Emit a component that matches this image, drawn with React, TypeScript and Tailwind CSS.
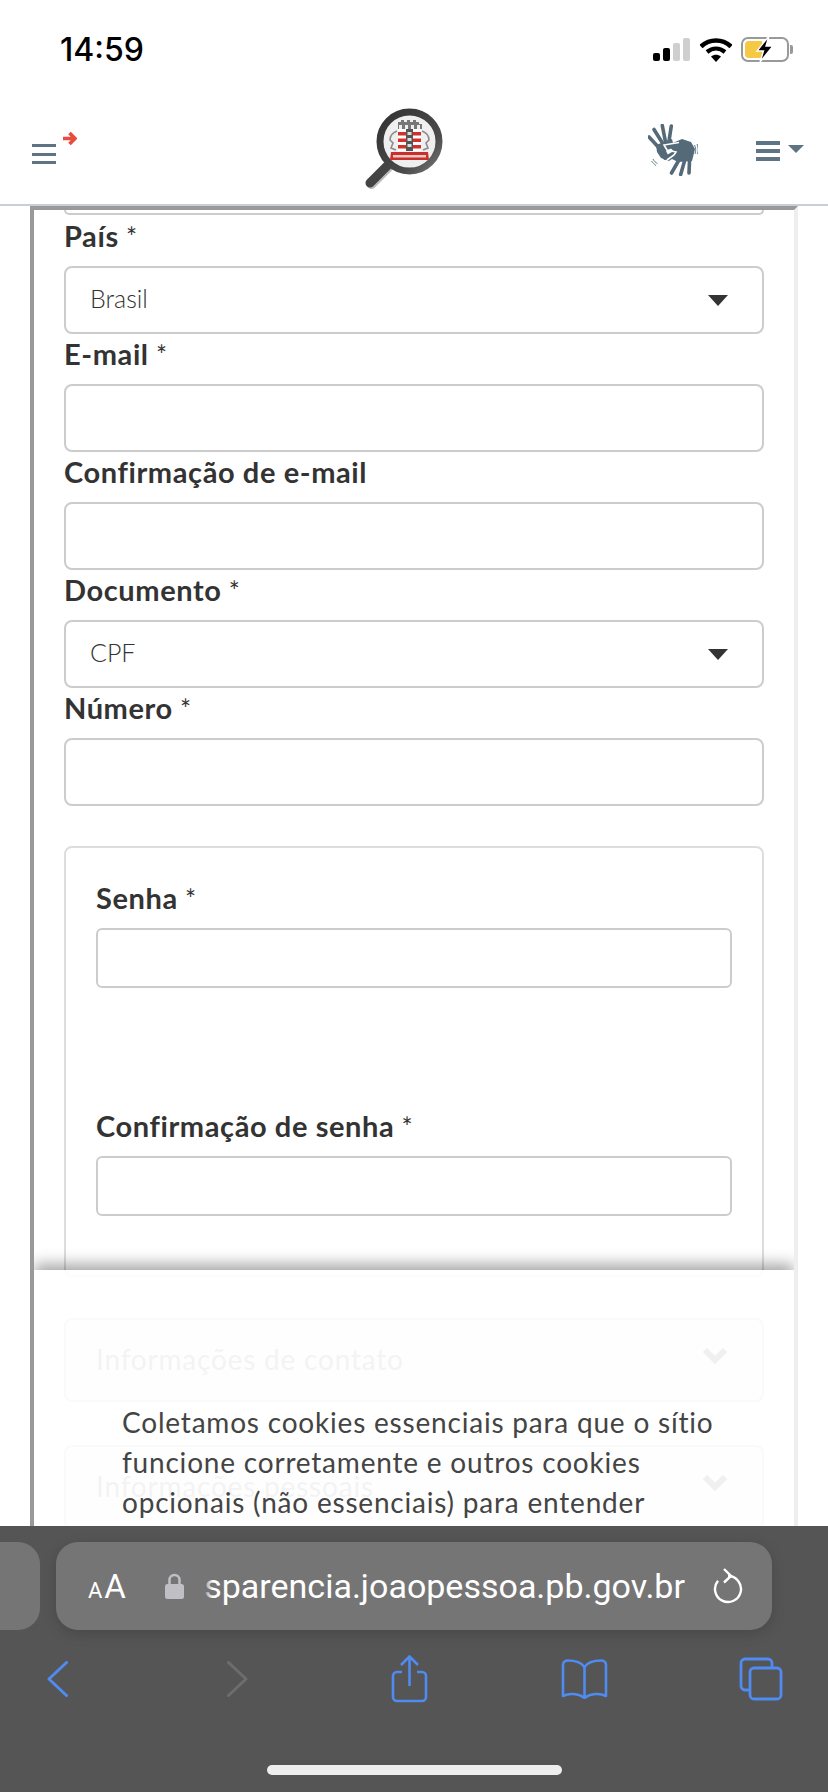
import React from 'react';

const font = { fontFamily: 'Lato, "Noto Sans", sans-serif' };

function Hamburger({ className, barClass }: { className: string; barClass: string }) {
  return (
    <div className={`flex flex-col justify-between ${className}`}>
      <span className={`block bg-[#5f7482] ${barClass}`} />
      <span className={`block bg-[#5f7482] ${barClass}`} />
      <span className={`block bg-[#5f7482] ${barClass}`} />
    </div>
  );
}

function Logo() {
  return (
    <svg width="82" height="82" viewBox="0 0 82 82" className="block">
      <defs>
        <linearGradient id="ring" x1="0" y1="0" x2="1" y2="1">
          <stop offset="0" stopColor="#333" />
          <stop offset="0.7" stopColor="#4a4a4a" />
          <stop offset="1" stopColor="#777" />
        </linearGradient>
      </defs>
      <line x1="24" y1="58" x2="7" y2="75" stroke="#bbb" strokeWidth="9" strokeLinecap="round" transform="translate(1.5 1.5)" />
      <line x1="24" y1="58" x2="7" y2="75" stroke="#444" strokeWidth="9" strokeLinecap="round" />
      <circle cx="46.5" cy="33.500" r="29.500" fill="#efefef" stroke="url(#ring)" strokeWidth="7" />
      {/* crest */}
      <path d="M35 14h3v-2h3v2h3v-2h3v2h3v-2h3v2h3v2h3v5H35z" fill="#777" />
      <path d="M36 17h3v4h-3zM42 17h3v4h-3zM48 17h3v4h-3zM54 17h3v4h-3z" fill="#eee" />
      <rect x="35" y="21" width="23" height="22" fill="#fff" />
      <path d="M35 24h8v3.500h-8zM35 30.500h8V34h-8zM35 37h8v3.500h-8zM50 24h8v3.500h-8zM50 30.500h8V34h-8zM50 37h8v3.500h-8z" fill="#d2302c" />
      <rect x="43" y="21" width="7" height="22" fill="#555" />
      <path d="M44.500 24h4v3h-4zM44.500 30h4v3h-4zM44.500 36h4v3h-4z" fill="#ddd" />
      <path d="M34 23c-5 2-7 5-7 9l3 3-2 5 5 2M59 23c5 2 7 5 7 9l-3 3 2 5-5 2" fill="none" stroke="#8c8c8c" strokeWidth="1.600" />
      <path d="M28 44h37l1 8H27z" fill="#c9302c" />
      <rect x="30" y="47" width="33" height="2.500" fill="#f0c8c6" />
    </svg>
  );
}

function Hands() {
  return (
    <svg width="50" height="52" viewBox="0 0 50 52" className="block">
      <g stroke="#546a78" strokeWidth="3.600" strokeLinecap="round" fill="none">
        <path d="M1 13 13 26" />
        <path d="M6 5.500 15.700 21" />
        <path d="M14.300 1.500 17.700 19" />
        <path d="M23.300 2 20.700 19" />
        <path d="M17 34 31 26" />
        <path d="M23.500 49 35 29" />
        <path d="M32.700 50.500 37.700 32.700" />
        <path d="M41 49 41.700 32.700" />
      </g>
      <path d="M8 21 24 15 26 23 18 27 20 31 27 33 21 37 13 34 9 28z" fill="#546a78" />
      <path d="M20 21 34 15 43 18 47 25 44 37 30 38 20 33 27 29z" fill="#546a78" />
      <path d="M31 18.500 16 21 19 26 28 28 26 31 19 36" fill="none" stroke="#fff" strokeWidth="1.600" />
      <path d="M46.500 21c1.500 3 1.500 6 .5 9M49 20c1.500 3.500 1.500 7 .5 10M5 35c1 2 2.500 3.500 4.500 4.500M3.500 37c1.500 2 2.500 3 4.500 4.500" fill="none" stroke="#546a78" strokeWidth="0.900" />
    </svg>
  );
}

function StatusIcons() {
  return (
    <div className="flex items-center">
      <div className="flex h-[23px] items-end gap-[3px]">
        <span className="block h-[8px] w-[7px] rounded-[2px] bg-black" />
        <span className="block h-[13px] w-[7px] rounded-[2px] bg-black" />
        <span className="block h-[18px] w-[7px] rounded-[2px] bg-[#cfcfcf]" />
        <span className="block h-[23px] w-[7px] rounded-[2px] bg-[#cfcfcf]" />
      </div>
      <svg width="32" height="24" viewBox="0 0 32 24" className="ml-[10px]">
        <path d="M1 8.500C9.500 .5 22.500 .5 31 8.500" fill="none" stroke="#000" strokeWidth="4.600" />
        <path d="M7 14C12.500 9.500 19.500 9.500 25 14" fill="none" stroke="#000" strokeWidth="4.200" />
        <path d="M11 18.500 16 24 21 18.500C18 16 14 16 11 18.500z" fill="#000" />
      </svg>
      <div className="relative ml-[9px] h-[25px] w-[48px] rounded-[7px] border-2 border-[#999] p-[2px]">
        <div className="h-full w-[17px] rounded-l-[4px] bg-[#f6c945]" />
        <svg width="20" height="28" viewBox="0 0 20 28" className="absolute -top-[4px] left-[12px]">
          <path d="M14 1 2 16h6.500L5 27l13-16h-7l3-10z" fill="#000" stroke="#fff" strokeWidth="1.400" />
        </svg>
      </div>
      <span className="ml-px block h-[9px] w-[3px] rounded-r-[2px] bg-[#999]" />
    </div>
  );
}

function Label({ text, required = true }: { text: string; required?: boolean }) {
  return (
    <label className="flex h-[50px] items-center pb-[11px] text-[29px] font-bold tracking-[0.6px] text-[#333]">
      <span>
        {text}
        {required && <span className="text-[26px] font-normal"> *</span>}
      </span>
    </label>
  );
}

function SelectField({ label, value }: { label: string; value: string }) {
  return (
    <div>
      <Label text={label} />
      <div className="flex h-[68px] items-center justify-between rounded-lg border-2 border-[#ccc] bg-white pl-[24px] pr-[34px] text-[25px] font-light text-[#333]">
        <span className="-mt-[2px]">{value}</span>
        <svg width="20" height="11" viewBox="0 0 20 11">
          <path d="M0 0h20L10 11z" fill="#333" />
        </svg>
      </div>
    </div>
  );
}

function InputField({ label, required = true }: { label: string; required?: boolean }) {
  return (
    <div>
      <Label text={label} required={required} />
      <input className="block h-[68px] w-full rounded-lg border-2 border-[#ccc] bg-white" />
    </div>
  );
}

function PasswordField({ label }: { label: string }) {
  return (
    <div>
      <Label text={label} />
      <input className="block h-[60px] w-full rounded-md border-2 border-[#ccc] bg-white" />
    </div>
  );
}

function Accordion({ title, className }: { title: string; className: string }) {
  return (
    <div className={`flex h-[84px] items-center justify-between rounded-lg border-2 border-[#ccc] bg-[#f0f0f0] pl-[30px] pr-[34px] ${className}`}>
      <span className="-mt-[2px] text-[28px] tracking-[0.8px] text-[#888]">{title}</span>
      <svg width="26" height="18" viewBox="0 0 26 18" className="-mt-[8px]">
        <path d="M3 3 13 13 23 3" fill="none" stroke="#666" strokeWidth="6" />
      </svg>
    </div>
  );
}

function CookieNotice() {
  return (
    <div className="absolute left-0 right-0 top-[1060px] h-[300px] bg-white/90 shadow-[0_-6px_14px_rgba(0,0,0,0.35)]">
      <div className="pl-[88px] pt-[132px] text-[28px] leading-[40px] tracking-[0.8px] text-[#444]">
        <p className="whitespace-nowrap">Coletamos cookies essenciais para que o sítio</p>
        <p className="whitespace-nowrap">funcione corretamente e outros cookies</p>
        <p className="whitespace-nowrap">opcionais (não essenciais) para entender</p>
      </div>
    </div>
  );
}

function SafariBar() {
  return (
    <div className="h-[266px] bg-[#555] pt-[16px]" style={{ fontFamily: 'Roboto, Inter, sans-serif' }}>
      <div className="flex h-[88px] gap-[16px]">
        <div className="w-[40px] rounded-r-[22px] bg-[#757575]" />
        <div className="flex w-[716px] items-center rounded-[22px] bg-[#757575] pl-[32px] text-white shadow-[0_4px_14px_rgba(0,0,0,0.15)]">
          <div className="flex w-[40px] items-baseline">
            <span className="text-[22px] leading-none">A</span>
            <span className="ml-[2px] text-[33px] leading-none">A</span>
          </div>
          <svg width="19" height="26" viewBox="0 0 19 26" className="ml-[37px]">
            <path d="M4.500 12V7a5 5 0 0 1 10 0v5" fill="none" stroke="#c0bfc6" strokeWidth="2.500" />
            <rect x="0" y="11" width="19" height="15" rx="2.500" fill="#c0bfc6" />
          </svg>
          <div className="relative ml-[13px] flex w-[488px] justify-end overflow-hidden whitespace-nowrap text-[34px] leading-[44px]">
            <span>transparencia.joaopessoa.pb.gov.br</span>
            <div className="absolute bottom-0 left-0 top-0 w-[16px] bg-gradient-to-r from-[#757575] from-30% to-transparent" />
          </div>
          <svg width="30" height="36" viewBox="0 0 30 36" className="ml-[28px]">
            <path d="M15 8A13 13 0 1 1 5 12.700" fill="none" stroke="#fff" strokeWidth="2.400" />
            <path d="M11 1l7 7-7 6.500" fill="none" stroke="#fff" strokeWidth="2.400" />
          </svg>
        </div>
      </div>
      <div className="mt-[25px] flex h-[48px] items-center pl-[47px]">
        <svg width="21" height="36" viewBox="0 0 21 36">
          <path d="M19.500 1.500 2 18l17.500 16.500" fill="none" stroke="#4f8bf0" strokeWidth="3" strokeLinecap="round" strokeLinejoin="round" />
        </svg>
        <svg width="21" height="36" viewBox="0 0 21 36" className="ml-[159px]">
          <path d="M1.500 1.500 19 18 1.500 34.500" fill="none" stroke="#6d6d6d" strokeWidth="3" strokeLinecap="round" strokeLinejoin="round" />
        </svg>
        <svg width="37" height="48" viewBox="0 0 37 48" className="ml-[143px]">
          <path d="M11 17H6a4 4 0 0 0-4 4v21a4 4 0 0 0 4 4h25a4 4 0 0 0 4-4V21a4 4 0 0 0-4-4h-5" fill="none" stroke="#4f8bf0" strokeWidth="2.600" />
          <path d="M18.500 31V2M10 10l8.500-8.500L27 10" fill="none" stroke="#4f8bf0" strokeWidth="2.600" />
        </svg>
        <svg width="47" height="40" viewBox="0 0 47 40" className="ml-[133px]">
          <path d="M23.500 8C20 3 14 1.500 7 1.500 4 1.500 2 3 2 6v31c6-3 15-3 21.500 2 6.500-5 15.500-5 21.500-2V6c0-3-2-4.500-5-4.500-7 0-13 1.500-16.500 6.500zM23.500 8v31" fill="none" stroke="#4f8bf0" strokeWidth="2.600" strokeLinejoin="round" />
        </svg>
        <svg width="44" height="44" viewBox="0 0 44 44" className="ml-[131px]">
          <path d="M10 33H6a4 4 0 0 1-4-4V6a4 4 0 0 1 4-4h23a4 4 0 0 1 4 4v4" fill="none" stroke="#4f8bf0" strokeWidth="2.800" />
          <rect x="11" y="11" width="31" height="31" rx="4" fill="none" stroke="#4f8bf0" strokeWidth="2.800" />
        </svg>
      </div>
      <div className="ml-[267px] mt-[62px] h-[10px] w-[295px] rounded-full bg-[#eee]" />
    </div>
  );
}

export default function App() {
  return (
    <div className="flex h-[1792px] w-[828px] flex-col overflow-hidden bg-white" style={font}>
      <header className="h-[206px] shrink-0 border-b-2 border-[#c5d1d6]">
        <div className="flex h-[90px] items-start justify-between pl-[60px] pr-[35px]">
          <span className="mt-[30px] text-[32px] font-medium leading-[40px] text-black" style={{ fontFamily: 'Inter, sans-serif' }}>14:59</span>
          <div className="mt-[37px]">
            <StatusIcons />
          </div>
        </div>
        <nav className="flex items-start">
          <div className="relative ml-[32px] mt-[54px]">
            <Hamburger className="h-[20px] w-[24px]" barClass="h-[3px]" />
            <svg width="15" height="15" viewBox="0 0 15 15" className="absolute -right-[21px] -top-[13px]">
              <path d="M1 7.500h11M7.500 2l5.500 5.500-5.500 5.500" fill="none" stroke="#e74c3c" strokeWidth="3.600" />
            </svg>
          </div>
          <div className="ml-[307px] mt-[18px]">
            <Logo />
          </div>
          <div className="ml-[203px] mt-[34px]">
            <Hands />
          </div>
          <Hamburger className="ml-[58px] mt-[51px] h-[20px] w-[24px]" barClass="h-[4px]" />
          <svg width="16" height="8" viewBox="0 0 16 8" className="ml-[8px] mt-[55px]">
            <path d="M0 0h16L8 8z" fill="#5f7482" />
          </svg>
        </nav>
      </header>

      <main className="flex-1 overflow-hidden">
        <div className="relative ml-[30px] h-full w-[768px] overflow-hidden border-l-4 border-r-4 border-t-4 border-l-[#999] border-r-[#eee] border-t-[#999] px-[30px]">
          <div className="h-[5px] rounded-b-lg border-x-2 border-b-2 border-[#ccc]" />
          <div className="mt-px">
            <SelectField label="País" value="Brasil" />
            <InputField label="E-mail" />
            <InputField label="Confirmação de e-mail" required={false} />
            <SelectField label="Documento" value="CPF" />
            <InputField label="Número" />
          </div>

          <div className="mt-[40px] rounded-lg border-2 border-[#ddd] bg-white px-[30px] pb-[59px] pt-[30px]">
            <PasswordField label="Senha" />
            <div className="mt-[118px]">
              <PasswordField label="Confirmação de senha" />
            </div>
          </div>

          <Accordion title="Informações de contato" className="mt-[41px]" />
          <Accordion title="Informações pessoais" className="mt-[43px]" />

          <CookieNotice />
        </div>
      </main>

      <SafariBar />
    </div>
  );
}
